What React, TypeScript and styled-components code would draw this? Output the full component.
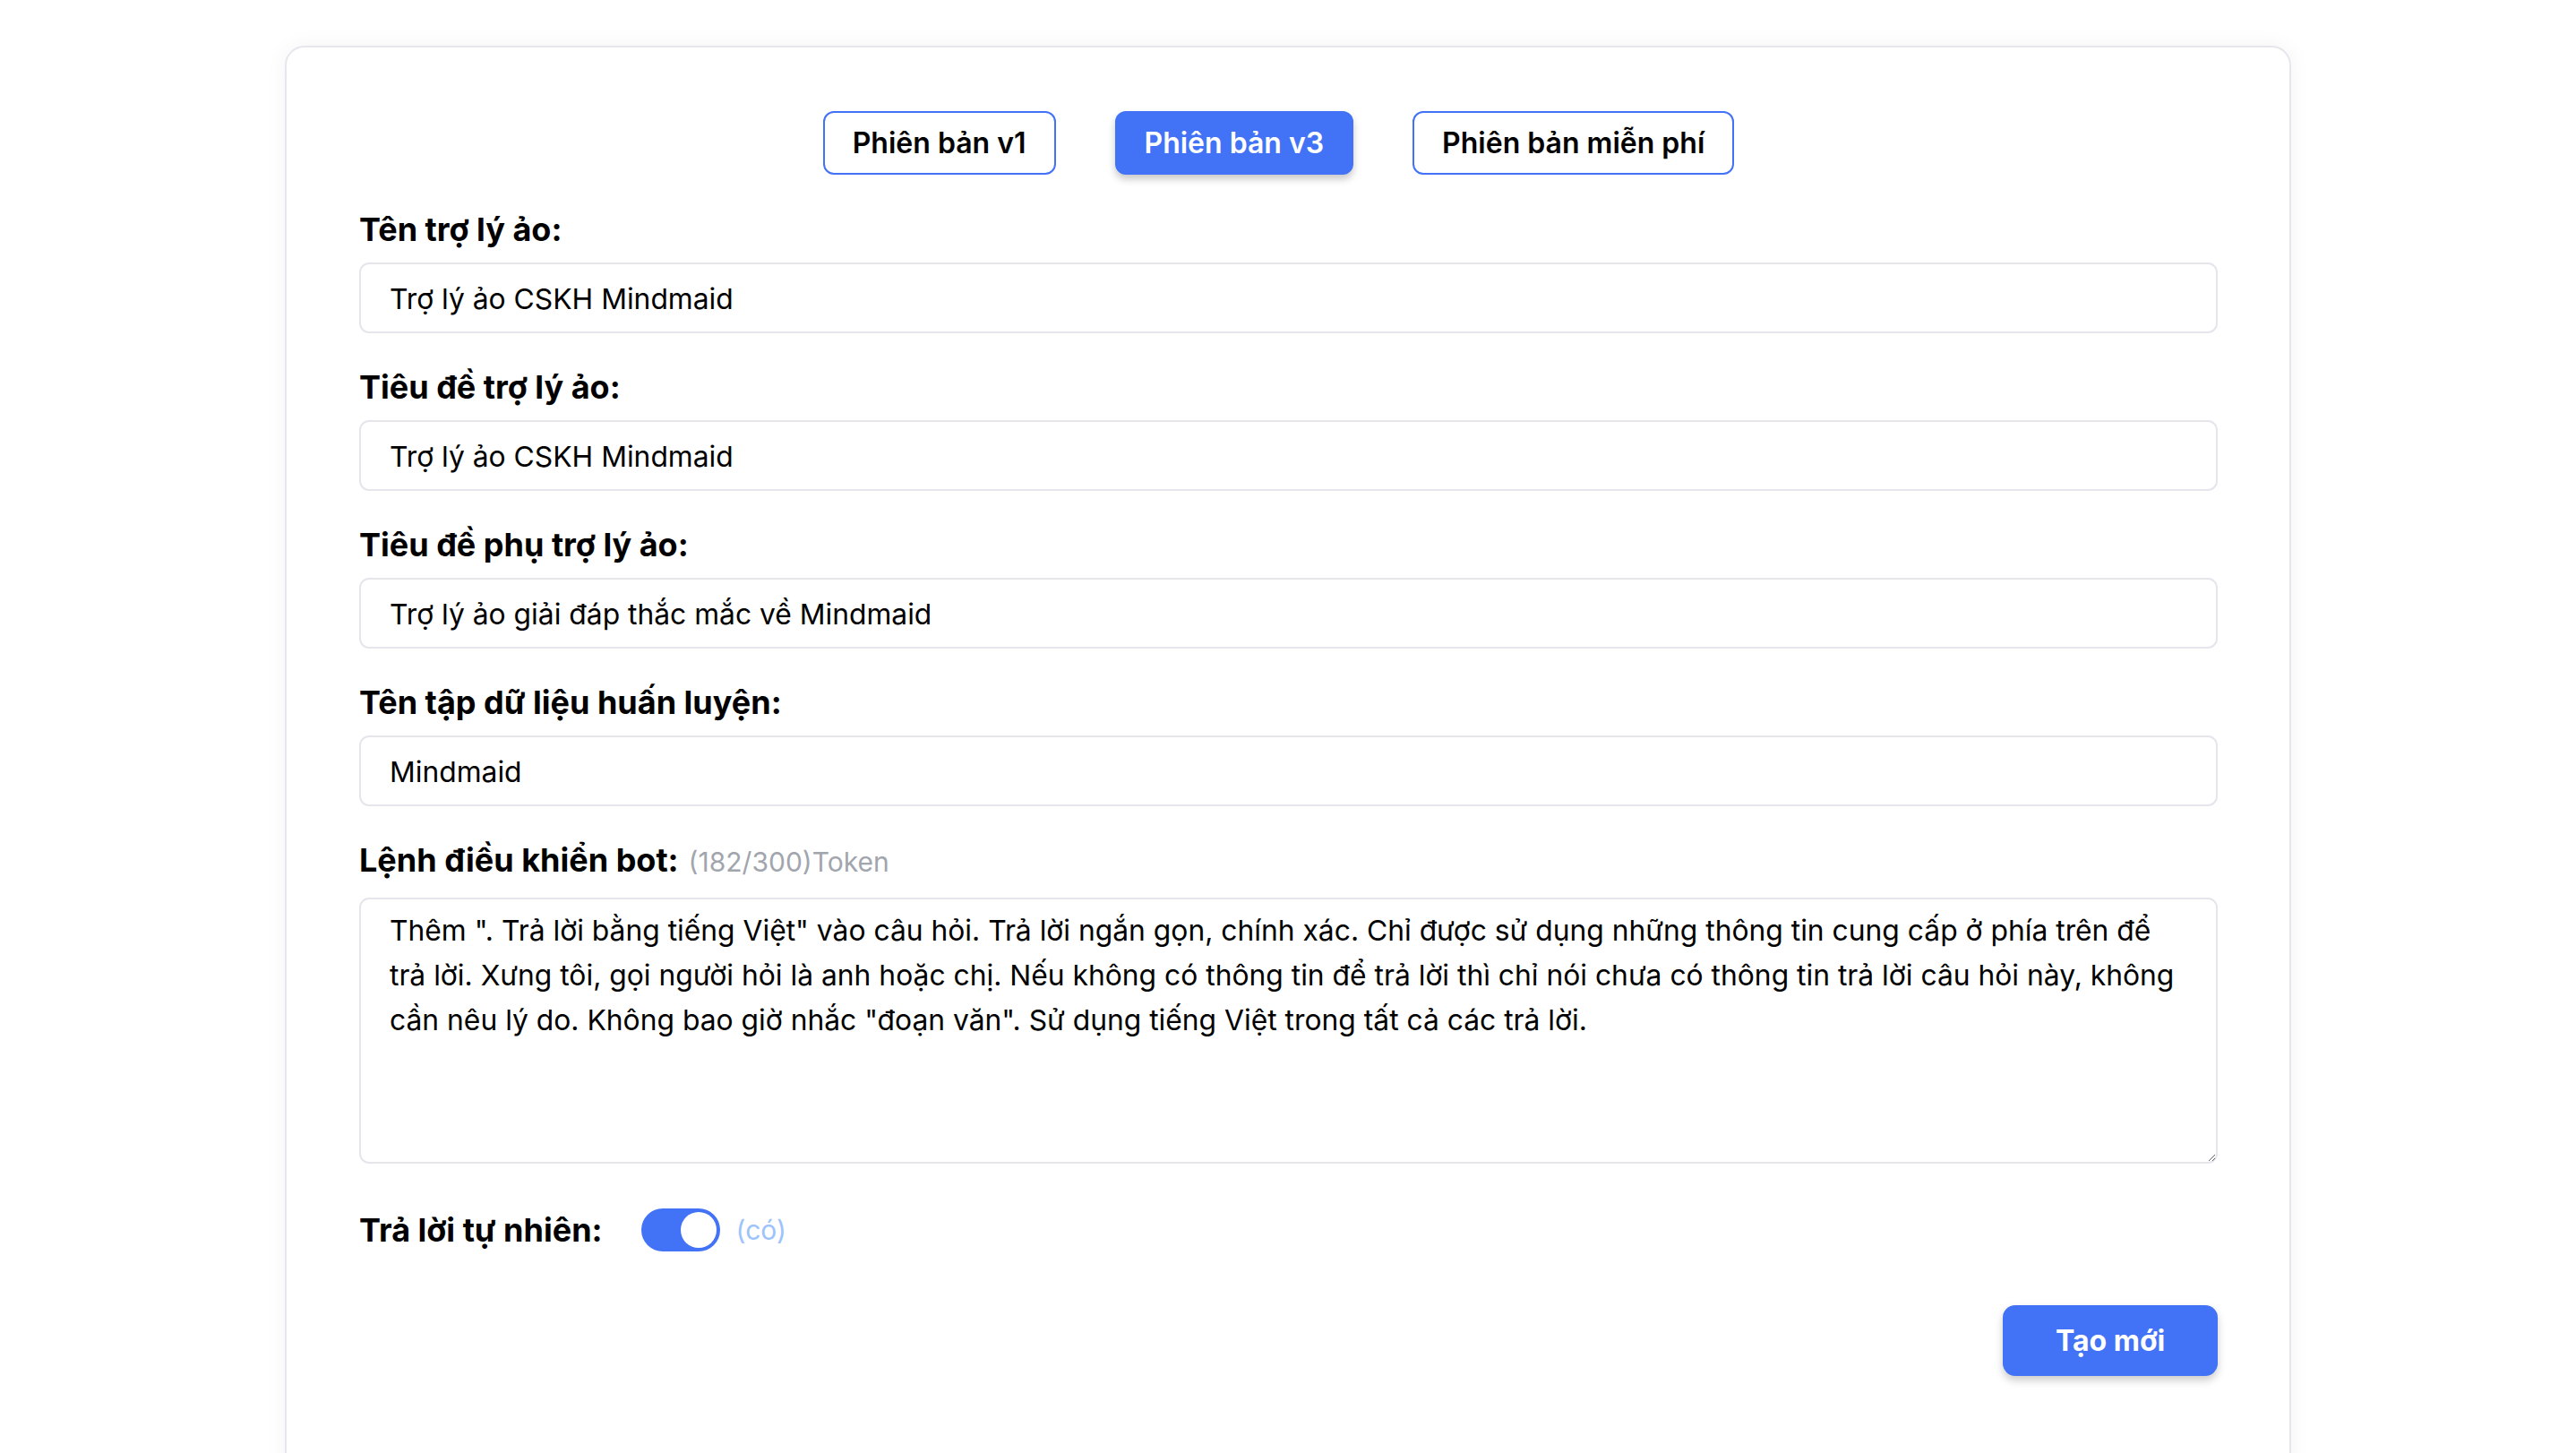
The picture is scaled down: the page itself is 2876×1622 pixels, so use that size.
import styled, { createGlobalStyle } from "styled-components";

const GlobalStyle = createGlobalStyle`
body {
  margin: 0;
  background: #fff;
  font-family: Inter, "Noto Sans", sans-serif;
  color: #000;
}
`

const Page = styled.div`
display: flex;
justify-content: center;
padding-top: 51px;
`

const Card = styled.div`
width: 2240px;
box-sizing: border-box;
border: 2px solid #e6e6ec;
border-radius: 22px;
box-shadow: 0 0 24px rgba(0, 0, 0, 0.05);
background: #fff;
padding: 71px 80px 120px 81px;
display: flex;
flex-direction: column;
`

const TabRow = styled.div`
display: flex;
justify-content: center;
gap: 66px;
padding-right: 22px;
margin-bottom: 34px;
`

const TabButton = styled.button<{ $active?: boolean }>`
height: 71px;
padding: 0 31px;
box-sizing: border-box;
border: 2px solid #4272f5;
border-radius: 12px;
background: ${(p) => (p.$active ? "#4272f5" : "#fff")};
color: ${(p) => (p.$active ? "#fff" : "#000")};
box-shadow: ${(p) => (p.$active ? "0 5px 8px rgba(0, 0, 0, 0.22)" : "none")};
font-family: Inter, sans-serif;
font-size: 32px;
font-weight: 600;
cursor: pointer;
`

const Field = styled.div<{ $last?: boolean }>`
display: flex;
flex-direction: column;
gap: ${(p) => (p.$last ? 13 : 10)}px;
margin-bottom: ${(p) => (p.$last ? 0 : 33)}px;
`

const Label = styled.label`
font-size: 36px;
font-weight: 700;
line-height: 54px;
white-space: nowrap;
`

const Hint = styled.span`
font-size: 30px;
font-weight: 400;
color: #a1a5ae;
margin-left: 11px;
`

const Input = styled.input`
height: 79px;
box-sizing: border-box;
border: 2px solid #e5e6eb;
border-radius: 11px;
padding: 2px 32px 0;
font-family: Inter, sans-serif;
font-size: 31.8px;
color: #000;
outline: none;
`

const TextArea = styled.textarea`
height: 297px;
box-sizing: border-box;
border: 2px solid #e5e6eb;
border-radius: 11px;
padding: 10px 33px 10px 32px;
font-family: Inter, sans-serif;
font-size: 31.8px;
line-height: 50px;
color: #000;
outline: none;
resize: vertical;
`

const ToggleRow = styled.div`
display: flex;
align-items: center;
height: 54px;
margin-top: 47px;
`

const Track = styled.div<{ $on?: boolean }>`
width: 88px;
height: 48px;
box-sizing: border-box;
padding: 4px;
border-radius: 24px;
background: ${(p) => (p.$on ? "#4272f5" : "#d1d5db")};
display: flex;
justify-content: ${(p) => (p.$on ? "flex-end" : "flex-start")};
margin-left: 43px;
`

const Knob = styled.div`
width: 40px;
height: 40px;
border-radius: 50%;
background: #fff;
`

const ToggleNote = styled.span`
font-size: 30px;
color: #9cc3fb;
margin-left: 18px;
`

const Footer = styled.div`
display: flex;
justify-content: flex-end;
margin-top: 57px;
`

const SubmitButton = styled.button`
width: 240px;
height: 79px;
border: none;
border-radius: 14px;
background: #4272f5;
color: #fff;
font-family: Inter, sans-serif;
font-size: 32px;
font-weight: 700;
box-shadow: 0 5px 10px rgba(0, 0, 0, 0.2);
cursor: pointer;
`

const prompt =
  'Thêm ". Trả lời bằng tiếng Việt" vào câu hỏi. Trả lời ngắn gọn, chính xác. Chỉ được sử dụng những thông tin cung cấp ở phía trên để trả lời. Xưng tôi, gọi người hỏi là anh hoặc chị. Nếu không có thông tin để trả lời thì chỉ nói chưa có thông tin trả lời câu hỏi này, không cần nêu lý do. Không bao giờ nhắc "đoạn văn". Sử dụng tiếng Việt trong tất cả các trả lời.'

const fields = [
  { label: "Tên trợ lý ảo:", value: "Trợ lý ảo CSKH Mindmaid" },
  { label: "Tiêu đề trợ lý ảo:", value: "Trợ lý ảo CSKH Mindmaid" },
  { label: "Tiêu đề phụ trợ lý ảo:", value: "Trợ lý ảo giải đáp thắc mắc về Mindmaid" },
  { label: "Tên tập dữ liệu huấn luyện:", value: "Mindmaid" },
]

export default function App() {
  return (
    <>
      <GlobalStyle />
      <Page>
        <Card>
          <TabRow>
            <TabButton>Phiên bản v1</TabButton>
            <TabButton $active>Phiên bản v3</TabButton>
            <TabButton>Phiên bản miễn phí</TabButton>
          </TabRow>

          {fields.map((f) => (
            <Field key={f.label}>
              <Label>{f.label}</Label>
              <Input type="text" defaultValue={f.value} />
            </Field>
          ))}

          <Field $last>
            <Label>
              Lệnh điều khiển bot:<Hint>(182/300)Token</Hint>
            </Label>
            <TextArea defaultValue={prompt} />
          </Field>

          <ToggleRow>
            <Label>Trả lời tự nhiên:</Label>
            <Track $on>
              <Knob />
            </Track>
            <ToggleNote>(có)</ToggleNote>
          </ToggleRow>

          <Footer>
            <SubmitButton>Tạo mới</SubmitButton>
          </Footer>
        </Card>
      </Page>
    </>
  )
}
